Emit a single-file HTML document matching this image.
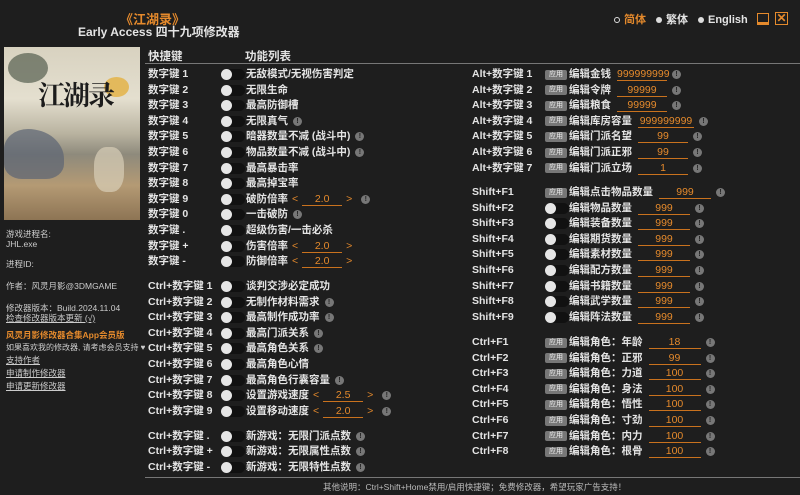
<!DOCTYPE html>
<html><head><meta charset="utf-8"><style>
*{margin:0;padding:0;box-sizing:border-box}
body{width:800px;height:495px;background:#1e1e1e;color:#e4e4e4;font-family:"Liberation Sans","Noto Sans CJK SC",sans-serif;font-size:10.5px;overflow:hidden;position:relative}
.a{position:absolute;white-space:nowrap}
.r{position:absolute;height:15px;line-height:15px;white-space:nowrap;font-weight:bold;display:flex;align-items:center}
.k{position:absolute;left:0}
.t{position:absolute;width:24px;height:11px;border-radius:6px;background:#111;top:2px}
.t::before{content:"";position:absolute;left:0;top:0;width:11px;height:11px;border-radius:50%;background:#e6e6e6}
.b{position:absolute;width:22px;height:10px;top:2.5px;background:#777;color:#eee;font-size:7px;line-height:10px;text-align:center;border-radius:2px;font-weight:normal}
.l{position:absolute;display:flex;align-items:center}
.f{display:inline-block;border-bottom:1px solid #c9721e;color:#e58a2c;text-align:center;height:13px;line-height:13px;font-weight:normal;margin-left:6px}
.i{display:inline-block;width:9px;height:9px;border-radius:50%;background:#777;color:#222;font-size:7px;line-height:9px;text-align:center;margin-left:5px;font-weight:bold}
.o{color:#e58a2c;margin:0 4px;font-weight:normal}
.lk{color:#3d8ee0;text-decoration:underline}
.sb{font-size:8.5px;color:#ccc;line-height:10px}
</style></head><body>
<div class="a" style="left:120px;top:9px;color:#e58a2c;font-size:13px;font-weight:bold">《江湖录》</div>
<div class="a" style="left:78px;top:23px;font-size:12px;font-weight:bold">Early Access 四十九项修改器</div>
<div class="a" style="left:614px;top:13px;font-size:11px;font-weight:bold;display:flex;align-items:center;line-height:14px">
<span style="display:inline-block;width:6px;height:6px;border:1.5px solid #ddd;border-radius:50%;margin-right:4px"></span><span style="color:#e58a2c">简体</span>
<span style="display:inline-block;width:6px;height:6px;background:#ddd;border-radius:50%;margin:0 4px 0 10px"></span>繁体
<span style="display:inline-block;width:6px;height:6px;background:#ddd;border-radius:50%;margin:0 4px 0 10px"></span>English
</div>
<div class="a" style="left:757px;top:13px;width:12px;height:12px;border:1.5px solid #e58a2c;border-bottom-width:3px"></div>
<div class="a" style="left:775px;top:12px;width:13px;height:13px;border:1.5px solid #e58a2c;color:#e58a2c;font-size:12px;line-height:10px;text-align:center;font-weight:bold">✕</div>
<div class="a" style="left:4px;top:47px;width:136px;height:173px;background:linear-gradient(180deg,#d8d2c0 0%,#e4dfcf 30%,#b9b3a0 50%,#8e8a7c 62%,#b49a74 80%,#8d7454 100%);overflow:hidden">
<div class="a" style="left:4px;top:6px;width:40px;height:30px;background:#3d4a3a;border-radius:50%;opacity:.6"></div>
<div class="a" style="left:100px;top:30px;width:25px;height:20px;background:#e4b040;border-radius:50%;opacity:.8"></div>
<div class="a" style="left:34px;top:27px;font-size:27px;font-weight:bold;color:#1c1c1c;font-family:'Noto Serif CJK SC',serif;letter-spacing:-2px">江湖录</div>
<div class="a" style="left:0;top:82px;width:60px;height:50px;background:#5b6474;opacity:.7;border-radius:40% 60% 30% 30%"></div>
<div class="a" style="left:90px;top:100px;width:30px;height:45px;background:#d8cfb8;opacity:.7;border-radius:40%"></div>
</div>
<div class="a sb" style="left:6px;top:229px">游戏进程名:<br>JHL.exe</div>
<div class="a sb" style="left:6px;top:259px">进程ID:</div>
<div class="a sb" style="left:6px;top:281px">作者：风灵月影@3DMGAME</div>
<div class="a sb" style="left:6px;top:303px">修改器版本：Build.2024.11.04<br><u>检查修改器版本更新 (√)</u></div>
<div class="a sb" style="left:6px;top:330px;color:#e58a2c;font-weight:bold">风灵月影修改器合集App会员版</div>
<div class="a sb" style="left:6px;top:343px;font-size:8px">如果喜欢我的修改器, 请考虑会员支持 ♥</div>
<div class="a sb lk" style="left:6px;top:355px">支持作者</div>
<div class="a sb lk" style="left:6px;top:368px">申请制作修改器</div>
<div class="a sb lk" style="left:6px;top:381px">申请更新修改器</div>
<div class="a" style="left:148px;top:48px;font-size:11.5px;font-weight:bold">快捷键</div>
<div class="a" style="left:245px;top:48px;font-size:11.5px;font-weight:bold">功能列表</div>
<div class="a" style="left:145px;top:63px;width:655px;height:1px;background:#777"></div>
<div class="a" style="left:145px;top:477px;width:655px;height:1px;background:#777"></div>
<div class="a" style="left:323px;top:481px;font-size:8.5px;color:#bbb">其他说明：Ctrl+Shift+Home禁用/启用快捷键；免费修改器，希望玩家广告支持！</div>

<div id="L"></div>
<script>
var h='';
function L(y,k,t){h+='<div class="r" style="left:148px;top:'+(y-7)+'px;width:320px"><span class="k">'+k+'</span><span class="t" style="left:73px"></span><span class="l" style="left:98px">'+t+'</span></div>';}
function R(y,k,tog,t){h+='<div class="r" style="left:472px;top:'+(y-7)+'px;width:320px"><span class="k">'+k+'</span>'+(tog?'<span class="t" style="left:73px"></span>':'<span class="b" style="left:73px">应用</span>')+'<span class="l" style="left:97px">'+t+'</span></div>';}
var I='<span class="i">!</span>',S='<span class="o">&lt;</span><span class="f" style="width:40px;margin:0">2.0</span><span class="o">&gt;</span>';
function F(v,w){return '<span class="f" style="width:'+(w||50)+'px">'+v+'</span>';}
var ys=[74,89.6,105.2,120.8,136.4,152,167.6,183.2,198.8,214.4,230,245.6,261.2];
var lk=['数字键 1','数字键 2','数字键 3','数字键 4','数字键 5','数字键 6','数字键 7','数字键 8','数字键 9','数字键 0','数字键 .','数字键 +','数字键 -'];
var lt=['无敌模式/无视伤害判定','无限生命','最高防御槽','无限真气'+I,'暗器数量不减 (战斗中)'+I,'物品数量不减 (战斗中)'+I,'最高暴击率','最高掉宝率','破防倍率 '+S+I,'一击破防'+I,'超级伤害/一击必杀','伤害倍率 '+S,'防御倍率 '+S];
for(var i=0;i<13;i++)L(ys[i],lk[i],lt[i]);
var ck=['Ctrl+数字键 1','Ctrl+数字键 2','Ctrl+数字键 3','Ctrl+数字键 4','Ctrl+数字键 5','Ctrl+数字键 6','Ctrl+数字键 7','Ctrl+数字键 8','Ctrl+数字键 9'];
var ct=['谈判交涉必定成功','无制作材料需求'+I,'最高制作成功率'+I,'最高门派关系'+I,'最高角色关系'+I,'最高角色心情','最高角色行囊容量'+I,'设置游戏速度 '+S.replace('2.0','2.5')+I,'设置移动速度 '+S+I];
for(i=0;i<9;i++)L(286+i*15.6,ck[i],ct[i]);
L(435.5,'Ctrl+数字键 .','新游戏：无限门派点数'+I);L(451,'Ctrl+数字键 +','新游戏：无限属性点数'+I);L(466.5,'Ctrl+数字键 -','新游戏：无限特性点数'+I);
var at=[['编辑金钱','999999999'],['编辑令牌','99999'],['编辑粮食','99999'],['编辑库房容量','999999999'],['编辑门派名望','99'],['编辑门派正邪','99'],['编辑门派立场','1']];
for(i=0;i<7;i++)R(74+i*15.6,'Alt+数字键 '+(i+1),0,at[i][0]+F(at[i][1],i==3?56:50)+I);
R(192,'Shift+F1',0,'编辑点击物品数量'+F('999',52)+I);
var st=['编辑物品数量','编辑装备数量','编辑期货数量','编辑素材数量','编辑配方数量','编辑书籍数量','编辑武学数量','编辑阵法数量'];
for(i=0;i<8;i++)R(207.6+i*15.6,'Shift+F'+(i+2),1,st[i]+F('999',52)+I);
var rt=[['年龄','18'],['正邪','99'],['力道','100'],['身法','100'],['悟性','100'],['寸劲','100'],['内力','100'],['根骨','100']];
for(i=0;i<8;i++)R(342+i*15.6,'Ctrl+F'+(i+1),0,'编辑角色：'+rt[i][0]+F(rt[i][1],52)+I);
document.getElementById('L').innerHTML=h;
</script>
</body></html>
